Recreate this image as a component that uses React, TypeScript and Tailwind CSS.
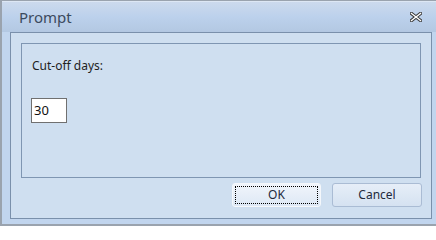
import React from "react"

function CloseGlyph() {
  return (
    <svg width="12" height="10" viewBox="0 0 12 10" className="block">
      <path d="M1.5 1.5 L10.5 8.5 M10.5 1.5 L1.5 8.5" stroke="#3b3b3b" strokeWidth="3.4" strokeLinecap="square" fill="none" />
      <path d="M1.5 1.5 L10.5 8.5 M10.5 1.5 L1.5 8.5" stroke="#ffffff" strokeWidth="1.4" strokeLinecap="square" fill="none" />
    </svg>
  )
}

export default function App() {
  return (
    <div className="w-[436px] h-[226px] flex flex-col border-t border-l-2 border-b-2 border-[#9aa3ae] bg-[#c1d5ee] font-['Noto_Sans','Open_Sans',sans-serif] select-none">
      {/* title bar */}
      <div className="h-[31px] flex items-center justify-between pl-[17px] pr-[14px] bg-gradient-to-b from-[#ccdaed] via-[#bcd1ec] to-[#b3c8e2] border-t border-[#dde7f4]">
        <span className="text-[15px] text-[#3b4a5e] leading-none">Prompt</span>
        <CloseGlyph />
      </div>

      {/* frame */}
      <div className="flex-1 pl-[8px] pr-[4px] pb-[5px]">
        <div className="h-[187px] border border-[#7a90ab] bg-[#cfdff0] p-[10px] flex flex-col">
          <div className="h-[135px] border border-[#7f96b2] pl-[9px] pt-[14px] flex flex-col items-start">
            <span className="text-[12px] text-[#1e1e1e] leading-[16px] pl-[1px]">Cut-off days:</span>
            <div className="mt-[24px] w-[36px] h-[25px] border border-[#707070] bg-white flex items-center pl-[2px]">
              <span className="text-[13px] text-[#111] leading-none">30</span>
            </div>
          </div>
          <div className="mt-[5px] flex justify-end gap-[11px]">
            <button className="w-[89px] h-[24px] rounded-[3px] border border-[#f4f7fb] bg-gradient-to-b from-[#f1f5fb] to-[#dde8f5] p-[2px]">
              <div className="w-full h-full border border-dotted border-black flex items-center justify-center text-[12px] text-[#1e2a3c]">
                OK
              </div>
            </button>
            <button className="w-[90px] h-[24px] rounded-[3px] border border-[#aabcd4] bg-gradient-to-b from-[#e6eef8] to-[#d5e2f1] flex items-center justify-center text-[12px] text-[#1e2a3c] mr-[-1px]">
              Cancel
            </button>
          </div>
        </div>
      </div>
    </div>
  )
}
